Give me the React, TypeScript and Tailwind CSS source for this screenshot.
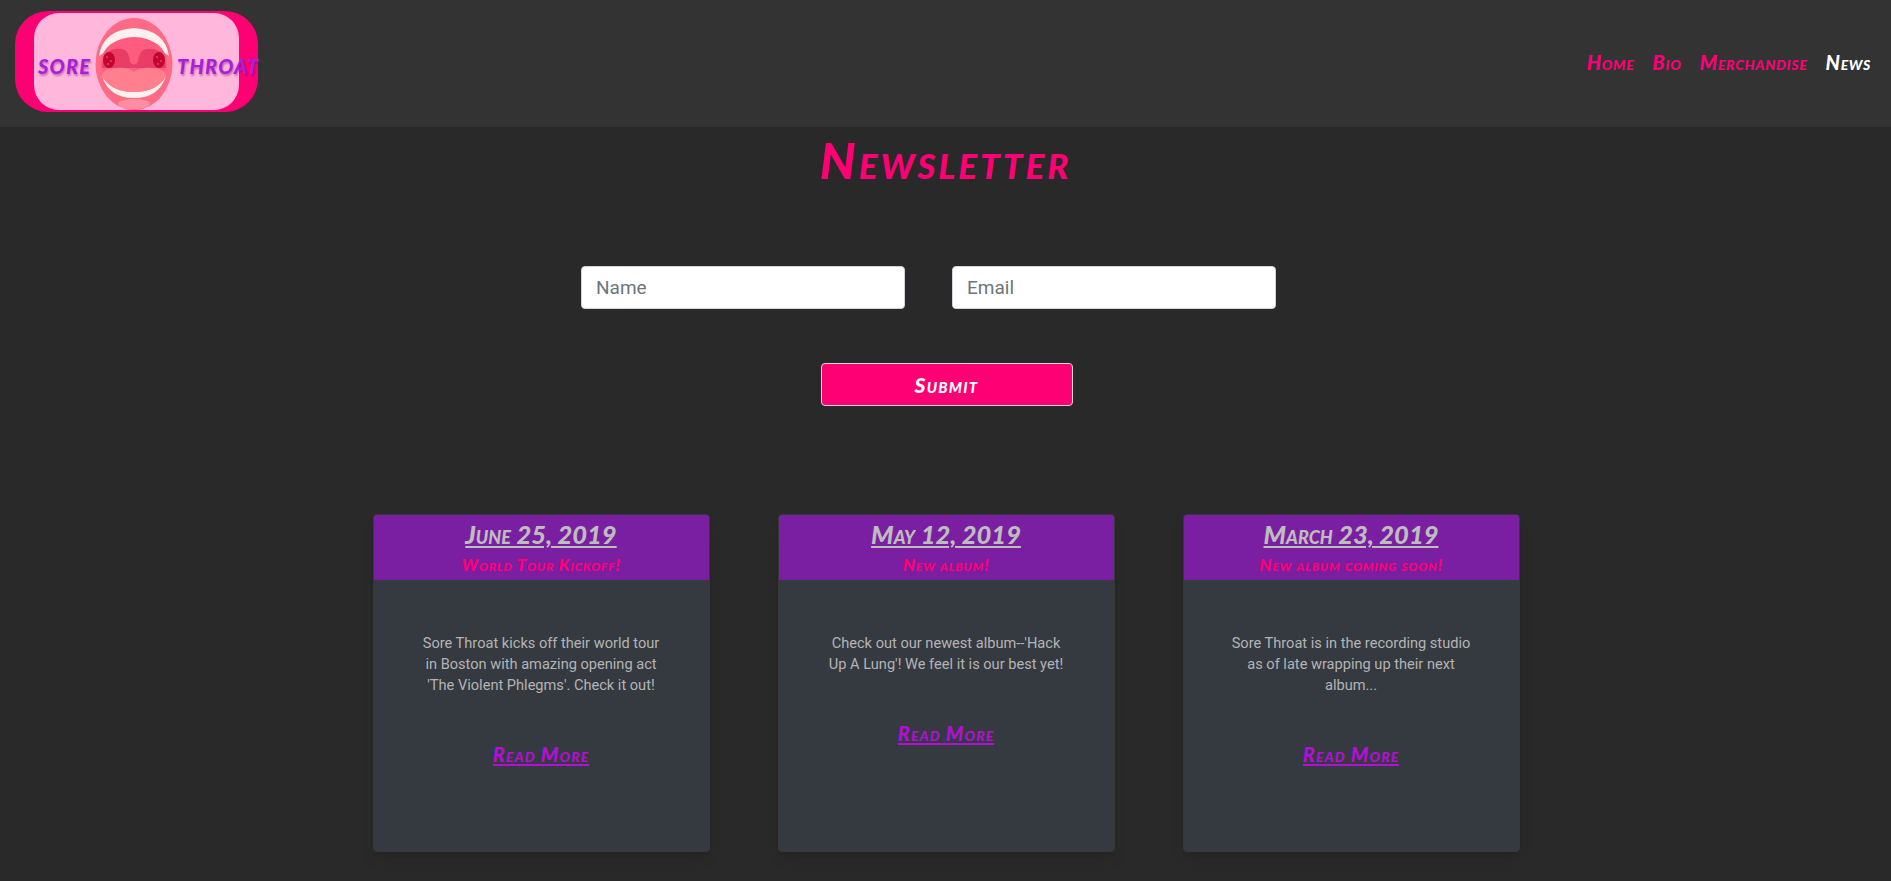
const marker = "[font-family:Lato,sans-serif] font-black italic [font-variant:small-caps]";

const posts = [
  {
    date: "June 25, 2019",
    title: "World Tour Kickoff!",
    body: "Sore Throat kicks off their world tour in Boston with amazing opening act 'The Violent Phlegms'. Check it out!",
  },
  {
    date: "May 12, 2019",
    title: "New album!",
    body: "Check out our newest album--'Hack Up A Lung'! We feel it is our best yet!",
  },
  {
    date: "March 23, 2019",
    title: "New album coming soon!",
    body: "Sore Throat is in the recording studio as of late wrapping up their next album...",
  },
];

function Mouth() {
  return (
    <svg viewBox="0 0 78 92" className="w-[78px] h-[92px] shrink-0 self-end">
      <ellipse cx="39" cy="46" rx="38.5" ry="46" fill="#ff6a84" />
      <ellipse cx="39" cy="86" rx="16" ry="5" fill="#ff8ea3" />
      {/* upper teeth */}
      <path d="M4 38 Q8 12 39 10 Q70 12 74 38 L68 34 Q60 20 39 20 Q18 20 10 34 Z" fill="#fff0f0" />
      {/* palate */}
      <ellipse cx="39" cy="44" rx="33" ry="25" fill="#ff5c80" />
      {/* throat */}
      <path d="M7 50 Q7 33 20 31 Q31 30 33 36 Q35 40 35 44 Q39 49 43 44 Q43 40 45 36 Q47 30 58 31 Q71 33 71 50 Z" fill="#ea3d66" />
      <ellipse cx="14" cy="42" rx="6" ry="8" fill="#c4062f" />
      <ellipse cx="64" cy="42" rx="6" ry="8" fill="#c4062f" />
      <circle cx="12" cy="39" r="0.7" fill="#ff8aa0" />
      <circle cx="16" cy="43" r="0.7" fill="#ff8aa0" />
      <circle cx="13" cy="46" r="0.7" fill="#ff8aa0" />
      <circle cx="62" cy="39" r="0.7" fill="#ff8aa0" />
      <circle cx="66" cy="43" r="0.7" fill="#ff8aa0" />
      <circle cx="63" cy="46" r="0.7" fill="#ff8aa0" />
      {/* lower teeth */}
      <path d="M7 58 Q14 80 39 80 Q64 80 71 58 Q62 74 39 74 Q16 74 7 58 Z" fill="#fff0f0" />
      {/* tongue */}
      <path d="M7 58 Q8 50 22 50 Q33 49 39 54 Q45 49 56 50 Q70 50 71 58 Q62 74 39 74 Q16 74 7 58 Z" fill="#ff7f8f" />
    </svg>
  );
}

function Logo() {
  return (
    <div className="w-[243px] h-[101px] rounded-[33px] bg-[#ff0074] pl-[19px] pr-[19px] py-[2px] shrink-0 mb-[4px]">
      <div className="w-[205px] h-[97px] rounded-[25px] bg-[#ffb8dc] flex items-center">
        <span className={`${marker} text-[#a81fd8] text-[28px] tracking-[1.2px] leading-none ml-[4px] w-[57px] shrink-0 mt-[3px] [text-shadow:1px_2px_2px_rgba(120,0,120,0.4)]`}>
          sore
        </span>
        <Mouth />
        <span className={`${marker} text-[#a81fd8] text-[28px] tracking-[1.2px] leading-none ml-[4px] shrink-0 mt-[3px] [text-shadow:1px_2px_2px_rgba(120,0,120,0.4)]`}>
          throat
        </span>
      </div>
    </div>
  );
}

function Card({ date, title, body }: { date: string; title: string; body: string }) {
  return (
    <div className="w-[337px] h-[338px] rounded-[4px] border border-[#383838] bg-[#343a40] overflow-hidden flex flex-col items-center shadow-lg">
      <div className="w-full h-[65px] bg-[#7b1fa2] flex flex-col items-center">
        <h2 className={`${marker} text-[#bdbdbd] text-[25.5px] leading-[30px] mt-[4px] underline decoration-2 underline-offset-2`}>
          {date}
        </h2>
        <h3 className={`${marker} text-[#ff0074] text-[17px] tracking-[0.8px] leading-[20px] mt-[6px]`}>{title}</h3>
      </div>
      <p className="w-[240px] mt-[53px] text-center text-[14.6px] leading-[21px] text-[#b4b4b4] [font-family:Roboto,sans-serif]">
        {body}
      </p>
      <a href="#" className={`${marker} text-[#b30fd6] text-[20px] tracking-[1px] leading-[24px] mt-[46px] underline underline-offset-2`}>
        Read More
      </a>
    </div>
  );
}

export default function App() {
  return (
    <div className="min-h-screen bg-[#292929]">
      <header className="h-[127px] bg-[#333333] flex items-center justify-between pl-[15px] pr-[20px]">
        <Logo />
        <nav className={`${marker} flex gap-[18px] text-[20px] tracking-[0.7px] leading-[24px] text-[#ff0074] mb-[4px]`}>
          <a href="#">Home</a>
          <a href="#">Bio</a>
          <a href="#">Merchandise</a>
          <a href="#" className="text-white">News</a>
        </nav>
      </header>

      <main className="flex flex-col items-center">
        <h1 className={`${marker} text-[#ff0074] text-[50px] tracking-[3px] leading-[56px] mt-[5px]`}>Newsletter</h1>

        <form className="flex flex-col items-center w-full mt-[78px]">
          <div className="flex justify-center gap-[47px] pr-[34px]">
            <input
              placeholder="Name"
              className="w-[324px] h-[43px] px-[14px] rounded-[4px] bg-white border border-[#ced4da] text-[19px] [font-family:Roboto,sans-serif] placeholder:text-[#6c757d]"
            />
            <input
              placeholder="Email"
              className="w-[324px] h-[43px] px-[14px] rounded-[4px] bg-white border border-[#ced4da] text-[19px] [font-family:Roboto,sans-serif] placeholder:text-[#6c757d]"
            />
          </div>
          <button
            type="submit"
            className={`${marker} w-[252px] h-[43px] mt-[54px] ml-[2px] rounded-[4px] bg-[#ff0074] border border-[#d8d8d8] text-white text-[21px] tracking-[1.2px]`}
          >
            Submit
          </button>
        </form>

        <section className="flex justify-center gap-[68px] mt-[108px] ml-[1px]">
          {posts.map((post) => (
            <Card key={post.date} {...post} />
          ))}
        </section>
      </main>
    </div>
  );
}
